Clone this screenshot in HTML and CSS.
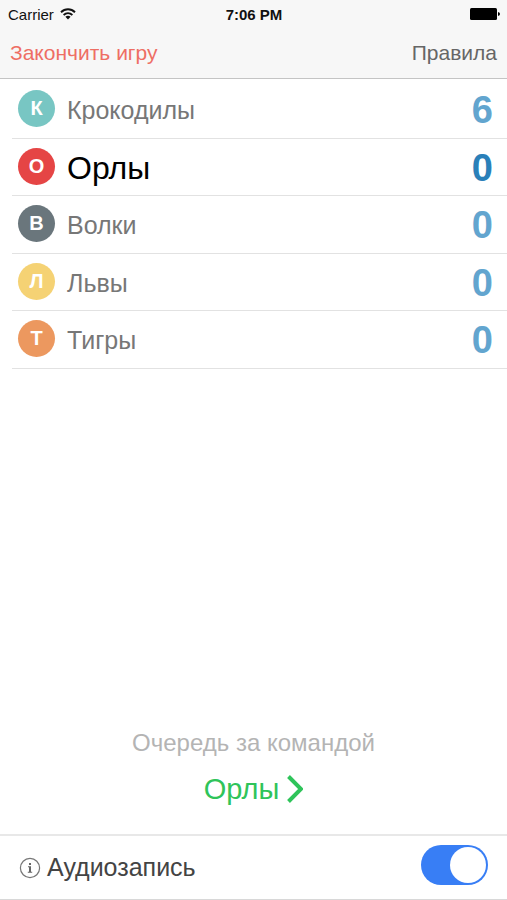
FILE: index.html
```html
<!DOCTYPE html>
<html lang="ru">
<head>
<meta charset="utf-8">
<meta name="viewport" content="width=device-width, initial-scale=1">
<title>Счёт игры</title>
<link rel="stylesheet" href="styles.css">
</head>
<body>
<header class="top">
  <div class="status">
    <div class="carrier">
      <span>Carrier</span>
      <svg class="wifi" viewBox="0 0 16 12" aria-hidden="true">
        <path d="M1 4.2C5 .3 11 .3 15 4.2" fill="none" stroke="#111" stroke-width="1.9"/>
        <path d="M3.6 7C6.2 4.6 9.8 4.6 12.4 7" fill="none" stroke="#111" stroke-width="1.8"/>
        <path d="M8 11.4L5.4 8.8Q8 6.8 10.6 8.8Z" fill="#111"/>
      </svg>
    </div>
    <div class="time">7:06 PM</div>
    <svg class="battery" viewBox="0 0 30 12" aria-hidden="true">
      <rect x="0" y="0" width="27" height="12" rx="1.5"/>
      <path d="M28 4Q30 4.500 30 6Q30 7.500 28 8Z"/>
    </svg>
  </div>
  <nav class="nav">
    <button class="link danger" type="button">Закончить игру</button>
    <button class="link" type="button">Правила</button>
  </nav>
</header>
<main class="main">
  <ul class="teams">
    <li class="team"><span class="badge teal">К</span><span class="name">Крокодилы</span><span class="score">6</span></li>
    <li class="team active"><span class="badge red">О</span><span class="name">Орлы</span><span class="score">0</span></li>
    <li class="team"><span class="badge gray">В</span><span class="name">Волки</span><span class="score">0</span></li>
    <li class="team"><span class="badge yellow">Л</span><span class="name">Львы</span><span class="score">0</span></li>
    <li class="team"><span class="badge orange">Т</span><span class="name">Тигры</span><span class="score">0</span></li>
  </ul>
  <section class="turn">
    <p class="caption">Очередь за командой</p>
    <button class="next" type="button">
      <span>Орлы</span>
      <svg class="chevron" viewBox="0 0 16 28" aria-hidden="true"><path d="M1.500 1.500L14 14L1.500 26.500" fill="none" stroke="#2fc45a" stroke-width="4"/></svg>
    </button>
  </section>
</main>
<footer class="audio">
  <svg class="info" viewBox="0 0 22 22" aria-hidden="true">
    <circle cx="11" cy="11" r="9.600" fill="none" stroke="#777" stroke-width="1.200"/>
    <path d="M10 6h2v2h-2zM9 9.300h3v5.500h1.200v1H8.800v-1H10v-4.500H9z" fill="#666"/>
  </svg>
  <label class="audio-label" for="rec">Аудиозапись</label>
  <input class="switch" id="rec" type="checkbox" role="switch" checked>
</footer>
</body>
</html>
```

FILE: styles.css
```css
* {
  box-sizing: border-box;
}

body {
  margin: 0;
  min-height: 100vh;
  display: flex;
  flex-direction: column;
  background: #fff;
  color: #444;
  font-family: "Liberation Sans", Arial, sans-serif;
}

button {
  border: 0;
  padding: 0;
  background: none;
  font: inherit;
  color: inherit;
}

.top {
  background: #f7f7f7;
  border-bottom: 1px solid #c4c4c4;
}

.status {
  display: grid;
  grid-template-columns: 1fr auto 1fr;
  align-items: center;
  height: 28px;
  padding: 0 7px 0 8px;
  color: #111;
  font-size: 15px;
}

.carrier {
  display: flex;
  align-items: center;
  gap: 6px;
}

.wifi {
  width: 16px;
  height: 12px;
}

.time {
  font-weight: 700;
}

.battery {
  justify-self: end;
  width: 30px;
  height: 12px;
}

.nav {
  display: flex;
  justify-content: space-between;
  align-items: center;
  height: 50px;
  padding: 0 10px;
}

.link {
  font-size: 21px;
  color: #666;
}

.danger {
  color: #ee6e64;
}

.main {
  flex: 1;
  display: flex;
  flex-direction: column;
  justify-content: space-between;
}

.teams {
  list-style: none;
  margin: 0;
  padding: 2px 0 0 12px;
}

.team {
  display: flex;
  align-items: center;
  gap: 12px;
  height: 58px;
  padding: 2px 14px 0 6px;
  border-bottom: 1px solid #e2e2e2;
}

.team:nth-child(even) {
  height: 57px;
}

.badge {
  display: flex;
  align-items: center;
  justify-content: center;
  width: 37px;
  height: 37px;
  margin-bottom: 4px;
  border-radius: 50%;
  color: #fff;
  font-size: 20px;
  font-weight: 700;
}

.teal { background: #78c6c3; }
.red { background: #e54545; }
.gray { background: #6a767c; }
.yellow { background: #f5d274; }
.orange { background: #ec985f; }

.name {
  flex: 1;
  color: #777;
  font-size: 25px;
}

.score {
  color: #62a5cf;
  font-size: 38px;
  font-weight: 700;
}

.active .name {
  color: #000;
  font-size: 32px;
}

.active .score {
  color: #2a80b9;
}

.turn {
  display: flex;
  flex-direction: column;
  align-items: center;
  gap: 12px;
  padding-bottom: 27px;
}

.caption {
  margin: 0;
  color: #b4b4b4;
  font-size: 24px;
  line-height: 32px;
}

.next {
  display: flex;
  align-items: center;
  gap: 8px;
  color: #2fc45a;
  font-size: 29px;
  line-height: 36px;
}

.chevron {
  width: 16px;
  height: 28px;
}

.audio {
  display: flex;
  align-items: center;
  height: 66px;
  padding: 0 19px;
  border-top: 2px solid #e8e8e8;
  border-bottom: 1px solid #d8d8d8;
}

.info {
  width: 22px;
  height: 22px;
}

.audio-label {
  flex: 1;
  padding-left: 6px;
  font-size: 25px;
}

.switch {
  appearance: none;
  display: flex;
  align-items: center;
  width: 67px;
  height: 40px;
  margin: 0 0 6px;
  padding: 0 2px;
  border-radius: 20px;
  background: #ccc;
}

.switch::before {
  content: "";
  width: 36px;
  height: 36px;
  border-radius: 50%;
  background: #fff;
}

.switch:checked {
  justify-content: flex-end;
  background: #387ef5;
}
```
